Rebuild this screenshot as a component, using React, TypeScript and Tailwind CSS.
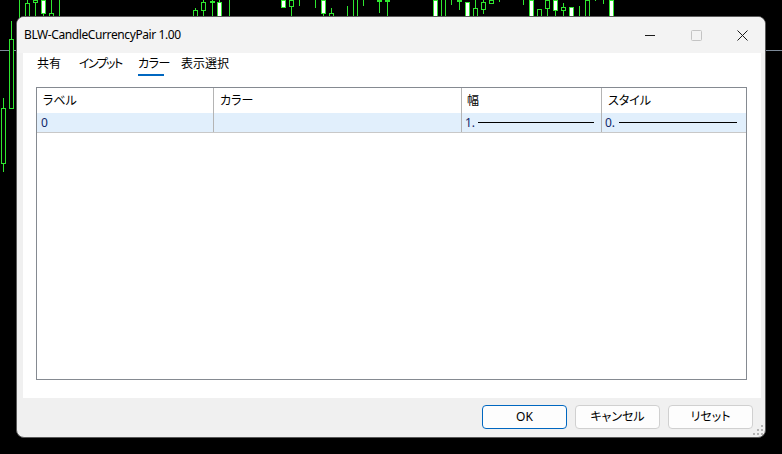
import React from "react";

type Candle = { x: number; bt?: number; bb?: number; wt?: number; wb?: number; white?: boolean };

const G = "#2fe62f";

const candles: Candle[] = [
  { x: 1, bt: 108, bb: 163, wt: 98, wb: 172 },
  { x: 9, bt: 39, bb: 108, wt: 21, wb: 108 },
  { x: 17, wt: 0, wb: 20 },
  { x: 25, bt: 3, bb: 20, wt: 0, wb: 3 },
  { x: 33, bt: 0, bb: 2, wt: 0, wb: 20 },
  { x: 41, bt: 0, bb: 13, wt: 0, wb: 16, white: true },
  { x: 49, bt: 13, bb: 20, wt: 0, wb: 13 },
  { x: 57, wt: 0, wb: 20 },
  { x: 193, bt: 10, bb: 20, wt: 8, wb: 20 },
  { x: 201, bt: 2, bb: 10, wt: 0, wb: 20 },
  { x: 210, bt: 1, bb: 2, wt: 0, wb: 20 },
  { x: 217, bt: 2, bb: 20, wt: 0, wb: 2, white: true },
  { x: 227, wt: 0, wb: 20 },
  { x: 281, bt: 0, bb: 7, white: true },
  { x: 289, bt: 0, bb: 6, wt: 0, wb: 20 },
  { x: 297, wt: 0, wb: 6 },
  { x: 313, wt: 0, wb: 8 },
  { x: 321, bt: 0, bb: 13, wt: 0, wb: 16, white: true },
  { x: 329, bt: 13, bb: 20, wt: 8, wb: 13 },
  { x: 345, wt: 6, wb: 20 },
  { x: 351, wt: 0, wb: 20 },
  { x: 355, wt: 0, wb: 20 },
  { x: 361, wt: 0, wb: 6 },
  { x: 377, bt: 0, bb: 1, wt: 0, wb: 13 },
  { x: 385, bt: 0, bb: 1, wt: 0, wb: 20 },
  { x: 433, bt: 0, bb: 20, white: true },
  { x: 439, wt: 0, wb: 20 },
  { x: 443, wt: 0, wb: 20 },
  { x: 449, wt: 0, wb: 5 },
  { x: 457, bt: 0, bb: 1, wt: 0, wb: 10 },
  { x: 465, bt: 2, bb: 20, white: true },
  { x: 473, bt: 8, bb: 20, wt: 0, wb: 8 },
  { x: 481, bt: 2, bb: 9, wt: 0, wb: 14 },
  { x: 489, bt: 0, bb: 3, wt: 0, wb: 3 },
  { x: 497, wt: 0, wb: 2 },
  { x: 521, wt: 0, wb: 5 },
  { x: 529, bt: 0, bb: 20, white: true },
  { x: 537, bt: 9, bb: 20, wt: 9, wb: 20 },
  { x: 545, bt: 0, bb: 8, wt: 0, wb: 20 },
  { x: 553, bt: 0, bb: 10, wt: 0, wb: 16, white: true },
  { x: 561, bt: 7, bb: 10, wt: 3, wb: 20 },
  { x: 569, bt: 7, bb: 20, white: true },
  { x: 577, wt: 6, wb: 20 },
  { x: 585, bt: 0, bb: 20 },
  { x: 593, wt: 0, wb: 1 },
  { x: 601, wt: 0, wb: 4 },
  { x: 609, bt: 0, bb: 20, white: true },
];

function Chart() {
  return (
    <svg className="absolute inset-0" width={782} height={454} viewBox="0 0 782 454">
      <line x1={0} y1={50.5} x2={782} y2={50.5} stroke="#7d8a99" strokeWidth={1} />
      {candles.map((c, i) => (
        <g key={i}>
          {c.wt !== undefined && c.wb !== undefined && (
            <line x1={c.x + 2.5} y1={c.wt} x2={c.x + 2.5} y2={c.wb} stroke={G} strokeWidth={1} />
          )}
          {c.bt !== undefined && c.bb !== undefined && (
            <rect
              x={c.x + 0.5}
              y={c.bt + 0.5}
              width={4}
              height={Math.max(c.bb - c.bt, 1)}
              fill={c.white ? "#ffffff" : "#000000"}
              stroke={G}
              strokeWidth={1}
            />
          )}
        </g>
      ))}
    </svg>
  );
}

function Grip() {
  const dots: [number, number][] = [
    [8, 0],
    [4, 4],
    [8, 4],
    [0, 8],
    [4, 8],
    [8, 8],
  ];
  return (
    <svg className="absolute right-[2px] bottom-[2px]" width={10} height={10} viewBox="0 0 10 10">
      {dots.map(([x, y], i) => (
        <rect key={i} x={x} y={y} width={2} height={2} fill="#b4b4b4" />
      ))}
    </svg>
  );
}

export default function App() {
  const font = "font-['Noto_Sans','Noto_Sans_CJK_JP',sans-serif] [font-feature-settings:'palt']";
  return (
    <div className={`relative w-[782px] h-[454px] bg-black overflow-hidden ${font}`}>
      <Chart />
      <div className="absolute left-[16px] top-[16px] w-[750px] h-[422px] rounded-[8px] border border-[#5a5a5a] bg-[#f0f0f0] flex flex-col overflow-hidden text-[12px] text-[#1a1a1a]">
        {/* title bar */}
        <div className="h-[36px] shrink-0 flex items-center bg-[#f3f3f3]">
          <span className="pl-[7px] text-[12px] leading-[16px] tracking-[-0.4px] text-black">BLW-CandleCurrencyPair 1.00</span>
          <div className="ml-auto flex h-full">
            <div className="w-[46px] h-full flex items-center justify-center">
              <svg width={10} height={10} viewBox="0 0 10 10">
                <line x1={0} y1={5.5} x2={10} y2={5.5} stroke="#1a1a1a" strokeWidth={1} />
              </svg>
            </div>
            <div className="w-[46px] h-full flex items-center justify-center">
              <svg width={11} height={11} viewBox="0 0 11 11">
                <rect x={0.5} y={0.5} width={10} height={10} rx={1} fill="none" stroke="#c4c4c4" strokeWidth={1} />
              </svg>
            </div>
            <div className="w-[46px] h-full flex items-center justify-center">
              <svg width={11} height={11} viewBox="0 0 11 11">
                <path d="M0.5 0.5 L10.5 10.5 M10.5 0.5 L0.5 10.5" stroke="#1a1a1a" strokeWidth={1} />
              </svg>
            </div>
          </div>
        </div>

        {/* white panel */}
        <div className="ml-[6px] mr-[4px] h-[345px] shrink-0 bg-white flex flex-col">
          <div className="flex pl-[14px] pt-[3px] h-[23px] text-black">
            <div className="w-[42px] flex flex-col items-start">
              <span className="leading-[16px]">共有</span>
            </div>
            <div className="w-[59px] flex flex-col items-start">
              <span className="leading-[16px] tracking-[-1.6px]">インプット</span>
            </div>
            <div className="w-[43px] flex flex-col items-start">
              <span className="leading-[16px] w-[26px] whitespace-nowrap tracking-[-0.5px]">カラー</span>
              <div className="mt-[2px] w-[26px] h-[2px] bg-[#0067c0]" />
            </div>
            <div className="flex flex-col items-start">
              <span className="leading-[16px]">表示選択</span>
            </div>
          </div>

          <div className="ml-[13px] mr-[14px] mt-[11px] h-[293px] border border-[#858a91] flex flex-col">
            <div className="grid grid-cols-[176px_248px_140px_1fr] h-[25px] text-black">
              <div className="flex items-center pl-[6px]">ラベル</div>
              <div className="flex items-center pl-[6px] border-l border-[#b4b4b4]">カラー</div>
              <div className="flex items-center pl-[5px] border-l border-[#b4b4b4]">幅</div>
              <div className="flex items-center pl-[6px] border-l border-[#b4b4b4]">スタイル</div>
            </div>
            <div className="grid grid-cols-[176px_248px_140px_1fr] h-[20px] bg-[#e1effc] border-b border-[#c8c8c8] text-[#12286a]">
              <div className="flex items-center pl-[4px]">0</div>
              <div className="flex items-center border-l border-[#b4b4b4]" />
              <div className="flex items-center pl-[3px] border-l border-[#b4b4b4]">
                <span className="w-[13px]">1.</span>
                <div className="w-[116px] h-[1px] bg-black" />
              </div>
              <div className="flex items-center pl-[3px] border-l border-[#b4b4b4]">
                <span className="w-[14px]">0.</span>
                <div className="w-[118px] h-[1px] bg-black" />
              </div>
            </div>
          </div>
        </div>

        {/* footer */}
        <div className="flex justify-end gap-[8px] pr-[12px] pt-[7px]">
          <button className="w-[85px] h-[24px] rounded-[4px] border border-[#0067c0] bg-[#fdfdfd] text-black leading-[16px]">
            OK
          </button>
          <button className="w-[85px] h-[24px] rounded-[4px] border border-[#d0d0d0] bg-[#fdfdfd] text-black leading-[16px]">
            キャンセル
          </button>
          <button className="w-[85px] h-[24px] rounded-[4px] border border-[#d0d0d0] bg-[#fdfdfd] text-black leading-[16px]">
            リセット
          </button>
        </div>
        <Grip />
      </div>
    </div>
  );
}
